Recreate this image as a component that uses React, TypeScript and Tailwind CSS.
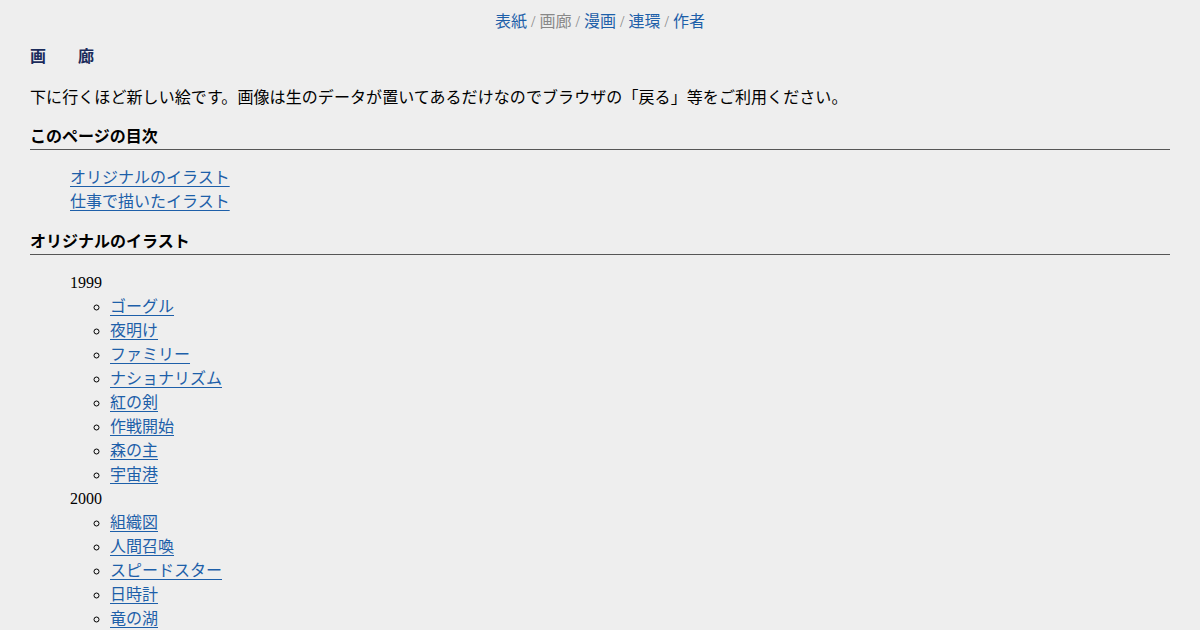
import React from "react";

const font = { fontFamily: '"Liberation Serif", "Noto Sans CJK JP", serif' };

function L({ children }: { children: React.ReactNode }) {
  return (
    <a href="#" className="text-[#1d5fa9] underline underline-offset-[3px]">
      {children}
    </a>
  );
}

function N({ children }: { children: React.ReactNode }) {
  return (
    <a href="#" className="text-[#1d5fa9] no-underline">
      {children}
    </a>
  );
}

const y1999 = ["ゴーグル", "夜明け", "ファミリー", "ナショナリズム", "紅の剣", "作戦開始", "森の主", "宇宙港"];
const y2000 = ["組織図", "人間召喚", "スピードスター", "日時計", "竜の湖"];

export default function App() {
  return (
    <div
      className="min-h-screen bg-[#eeeeee] px-[30px] text-[16px] leading-6 text-black"
      style={font}
    >
      <div className="pt-[10px] text-center">
        <N>表紙</N>
        <span className="text-[#888888]"> / 画廊 / </span>
        <N>漫画</N>
        <span className="text-[#888888]"> / </span>
        <N>連環</N>
        <span className="text-[#888888]"> / </span>
        <N>作者</N>
      </div>
      <h1 className="mt-[11px] font-bold tracking-[32px] text-[#1b2b5b]">画廊</h1>
      <p className="mt-[17px] tracking-[0.08px]">
        下に行くほど新しい絵です。画像は生のデータが置いてあるだけなのでブラウザの「戻る」等をご利用ください。
      </p>
      <h2 className="mt-[15px] border-b border-[#555555] font-bold">このページの目次</h2>
      <ul className="mt-4 list-none pl-10">
        <li>
          <L>オリジナルのイラスト</L>
        </li>
        <li>
          <L>仕事で描いたイラスト</L>
        </li>
      </ul>
      <h2 className="mt-4 border-b border-[#555555] font-bold">オリジナルのイラスト</h2>
      <ul className="mt-4 list-none pl-10">
        <li>
          1999
          <ul className="list-[circle] pl-10">
            {y1999.map((t) => (
              <li key={t}>
                <L>{t}</L>
              </li>
            ))}
          </ul>
        </li>
        <li>
          2000
          <ul className="list-[circle] pl-10">
            {y2000.map((t) => (
              <li key={t}>
                <L>{t}</L>
              </li>
            ))}
          </ul>
        </li>
      </ul>
    </div>
  );
}
